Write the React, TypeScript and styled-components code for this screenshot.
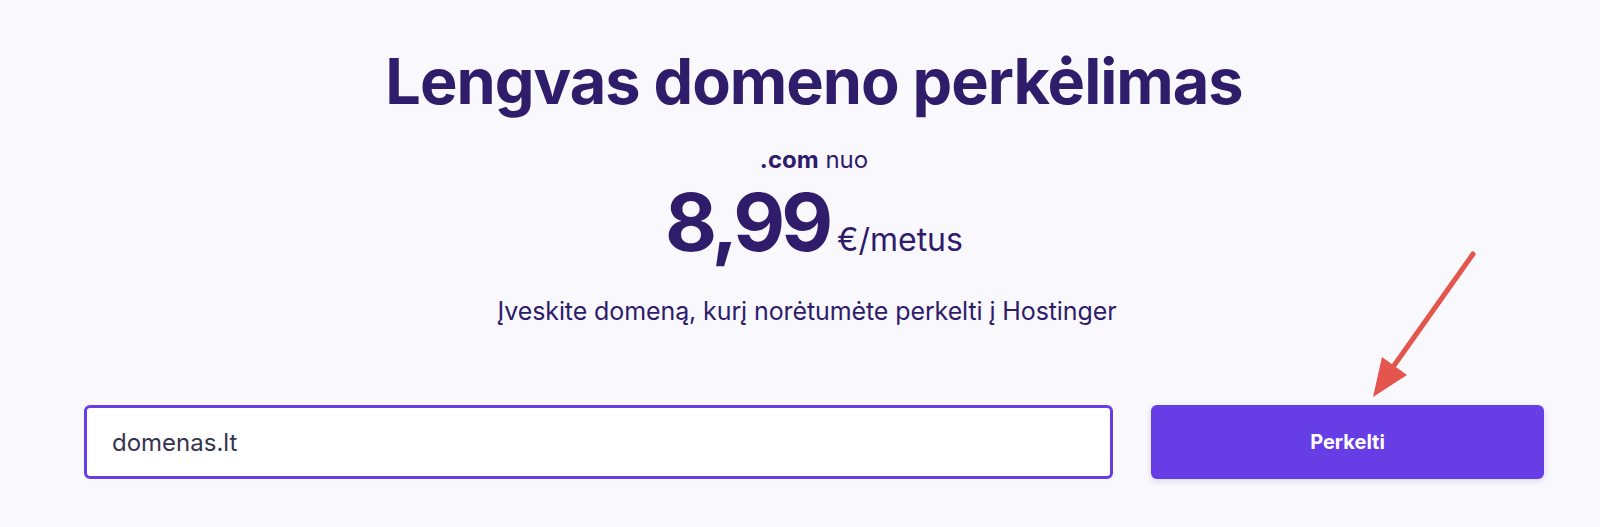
import styled, { createGlobalStyle } from "styled-components";

const GlobalStyle = createGlobalStyle`
  body {
    margin: 0;
    background: #f8f8fd;
    font-family: Inter, "Noto Sans", sans-serif;
  }
`;

const Page = styled.main`
  position: relative;
  min-height: 527px;
  box-sizing: border-box;
  padding: 44px 56px 0 84px;
  display: flex;
  flex-direction: column;
  align-items: center;
  color: #2f1c6a;
`;

const Title = styled.h1`
  margin: 0;
  font-size: 63px;
  line-height: 1.2;
  font-weight: 700;
  letter-spacing: -1px;
`;

const FromLabel = styled.div`
  margin-top: 26px;
  font-size: 24px;
  line-height: 1.2;
  b {
    font-weight: 700;
  }
`;

const PriceRow = styled.div`
  margin-top: 8px;
  display: flex;
  align-items: baseline;
  gap: 8px;
`;

const Amount = styled.span`
  font-size: 80px;
  line-height: 1;
  font-weight: 700;
  letter-spacing: -4px;
`;

const Unit = styled.span`
  font-size: 32px;
  line-height: 1;
`;

const Hint = styled.p`
  margin: 34px 14px 0 0;
  font-size: 25px;
  line-height: 1.2;
  letter-spacing: -0.1px;
`;

const Form = styled.form`
  margin-top: 79px;
  width: 100%;
  display: flex;
  gap: 38px;
`;

const DomainInput = styled.input`
  flex: 1;
  height: 74px;
  box-sizing: border-box;
  border: 3px solid #673de6;
  border-radius: 6px;
  background: #fff;
  padding: 0 25px;
  font-family: Inter, "Noto Sans", sans-serif;
  font-size: 24px;
  color: #36344d;
  outline: none;
`;

const SubmitButton = styled.button`
  width: 393px;
  height: 74px;
  border: none;
  border-radius: 6px;
  background: #673de6;
  color: #fff;
  font-family: Inter, "Noto Sans", sans-serif;
  font-size: 20px;
  font-weight: 700;
  box-shadow: 0 2px 6px rgba(47, 28, 106, 0.15);
  cursor: pointer;
`;

const Pointer = styled.svg`
  position: absolute;
  left: 0;
  top: 0;
  width: 1600px;
  height: 527px;
  pointer-events: none;
`;

export default function App() {
  return (
    <>
      <GlobalStyle />
      <Page>
        <Title>Lengvas domeno perkėlimas</Title>
        <FromLabel>
          <b>.com</b> nuo
        </FromLabel>
        <PriceRow>
          <Amount>8,99</Amount>
          <Unit>€/metus</Unit>
        </PriceRow>
        <Hint>Įveskite domeną, kurį norėtumėte perkelti į Hostinger</Hint>
        <Form onSubmit={(e) => e.preventDefault()}>
          <DomainInput defaultValue="domenas.lt" />
          <SubmitButton type="submit">Perkelti</SubmitButton>
        </Form>
        <Pointer viewBox="0 0 1600 527">
          <line x1="1473" y1="254" x2="1393" y2="367" stroke="#e3554d" strokeWidth="5" strokeLinecap="round" />
          <polygon points="1382,357 1407,375 1373,397" fill="#e3554d" />
        </Pointer>
      </Page>
    </>
  );
}
